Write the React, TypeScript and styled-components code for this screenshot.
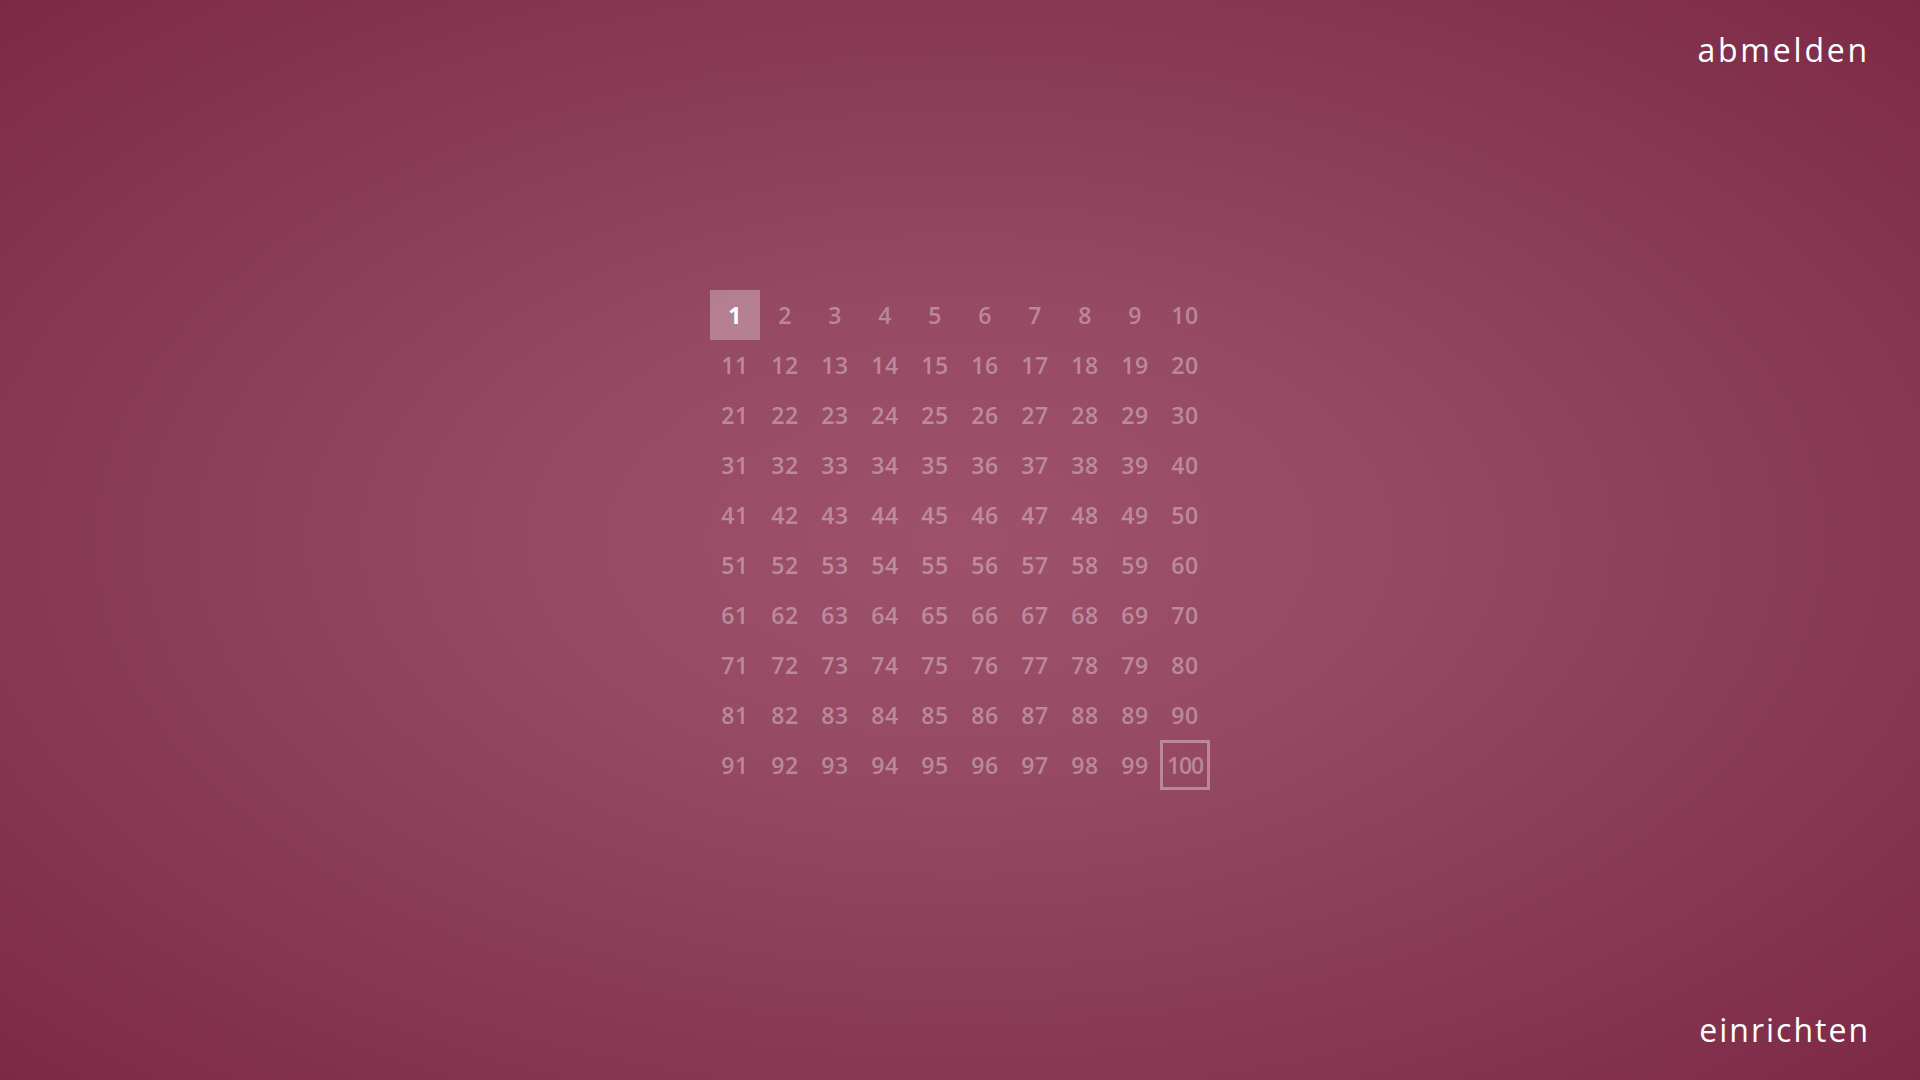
import { FC } from 'react';
import styled, { createGlobalStyle } from 'styled-components';

const GlobalStyle = createGlobalStyle`
    html, body, #root {
        margin: 0;
        padding: 0;
        height: 100%;
    }
    body {
        font-family: "Open Sans", "Noto Sans", sans-serif;
        overflow: hidden;
    }
`

const Screen = styled.div`
    width: 100vw;
    height: 100vh;
    box-sizing: border-box;
    padding: 28px 50px 28px 50px;
    display: grid;
    grid-template-rows: auto 1fr auto;
    background: radial-gradient(ellipse farthest-corner at 50% 50%, #9d516b 0%, #964a64 30%, #8a3d57 60%, #7d2946 100%);
`

const TopBar = styled.div`
    display: flex;
    justify-content: flex-end;
`

const BottomBar = styled.div`
    display: flex;
    justify-content: flex-end;
`

const Link = styled.a<{ $spacing: number }>`
    color: #fff;
    font-size: 32px;
    letter-spacing: ${p => p.$spacing}px;
    text-decoration: none;
    cursor: pointer;
    line-height: 44px;
`

const Center = styled.div`
    display: flex;
    align-items: center;
    justify-content: center;
`

const Grid = styled.div`
    display: grid;
    grid-template-columns: repeat(10, 50px);
    grid-auto-rows: 50px;
`

const Cell = styled.div<{ $active?: boolean; $target?: boolean }>`
    display: flex;
    align-items: center;
    justify-content: center;
    box-sizing: border-box;
    font-size: 23px;
    letter-spacing: ${p => (p.$target ? '-1.2px' : '0.5px')};
    color: ${p => (p.$active ? '#fff' : 'rgba(255,255,255,0.36)')};
    font-weight: ${p => (p.$active ? 700 : 600)};
    background: ${p => (p.$active ? 'rgba(255,255,255,0.3)' : 'transparent')};
    border: ${p => (p.$target ? '3px solid rgba(255,255,255,0.35)' : 'none')};
    cursor: pointer;
`

const App: FC = () => {
    const numbers = Array.from({ length: 100 }, (_, i) => i + 1);

    return (
        <>
            <GlobalStyle />
            <Screen>
                <TopBar>
                    <Link $spacing={2.8}>abmelden</Link>
                </TopBar>
                <Center>
                    <Grid>
                        {numbers.map(n => (
                            <Cell key={n} $active={n === 1} $target={n === 100}>{n}</Cell>
                        ))}
                    </Grid>
                </Center>
                <BottomBar>
                    <Link $spacing={2}>einrichten</Link>
                </BottomBar>
            </Screen>
        </>
    )
};

export default App;
